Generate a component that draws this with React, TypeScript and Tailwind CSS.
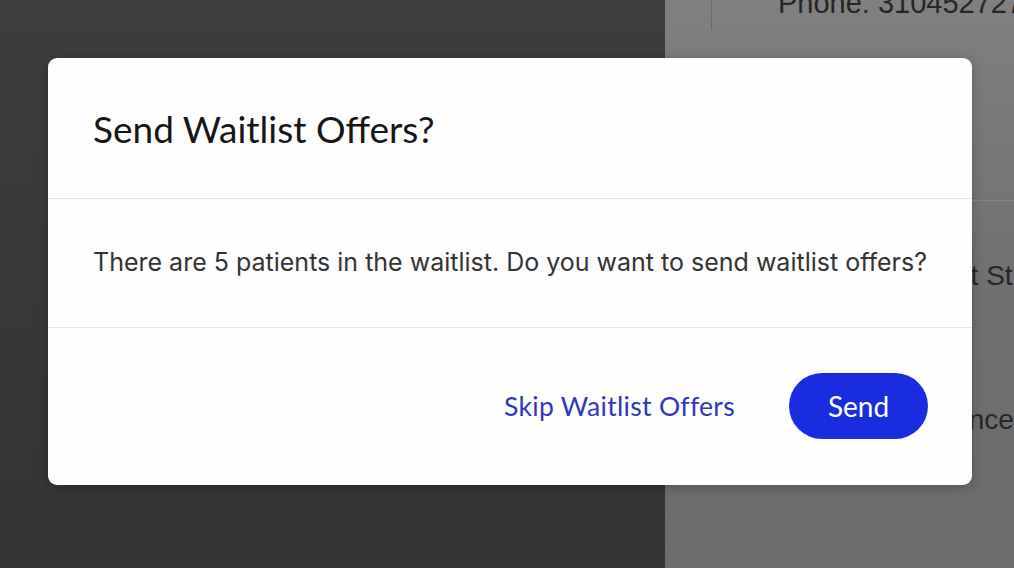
export default function App() {
  return (
    <div className="relative flex h-[568px] w-[1014px] overflow-hidden font-['Lato',sans-serif]">
      <div className="h-full w-[665px] shrink-0 bg-gradient-to-b from-[#3d3d3d] to-[#343434]" />
      <div className="relative flex h-full min-w-0 flex-1 flex-col overflow-hidden bg-gradient-to-b from-[#808080] via-[#707070] to-[#6c6c6c]">
        <div className="flex h-[30px]">
          <div className="ml-[46px] h-full w-px shrink-0 bg-[#6a6a6a]" />
          <div className="-mt-[18px] ml-[66px] whitespace-nowrap font-['Liberation_Sans',sans-serif] text-[29px] text-[#262626]">
            Phone: 3104527272
          </div>
        </div>
        <div className="mt-[170px] h-px w-full bg-[#848484]" />
        <div className="mt-[54px] pl-[290px] whitespace-nowrap font-['Liberation_Sans',sans-serif] text-[28px] text-[#262626]">
          nt St
        </div>
        <div className="mt-[102px] pl-[296px] whitespace-nowrap font-['Liberation_Sans',sans-serif] text-[28px] text-[#262626]">
          Ince
        </div>
      </div>

      <div className="absolute left-[48px] top-[58px] flex h-[427px] w-[924px] flex-col rounded-[9px] bg-[#fefefe] shadow-[0_2px_12px_rgba(0,0,0,0.25)]">
        <div className="flex h-[141px] items-center border-b border-[#e6e6e6] px-[45px]">
          <h2 className="text-[37px] leading-none text-[#161616]">Send Waitlist Offers?</h2>
        </div>
        <div className="flex h-[129px] items-center border-b border-[#e6e6e6] px-[45px]">
          <p className="font-['Inter',sans-serif] text-[25px] text-[#333333]">
            There are 5 patients in the waitlist. Do you want to send waitlist offers?
          </p>
        </div>
        <div className="flex flex-1 items-start justify-end gap-[54px] pr-[44px] pt-[45px]">
          <button type="button" className="mt-[20px] text-[26.5px] leading-none tracking-[0.3px] text-[#2f38b5]">
            Skip Waitlist Offers
          </button>
          <button
            type="button"
            className="flex h-[66px] w-[139px] items-center justify-center rounded-full bg-[#1a2ce0] text-[28px] text-white"
          >
            Send
          </button>
        </div>
      </div>
    </div>
  )
}
